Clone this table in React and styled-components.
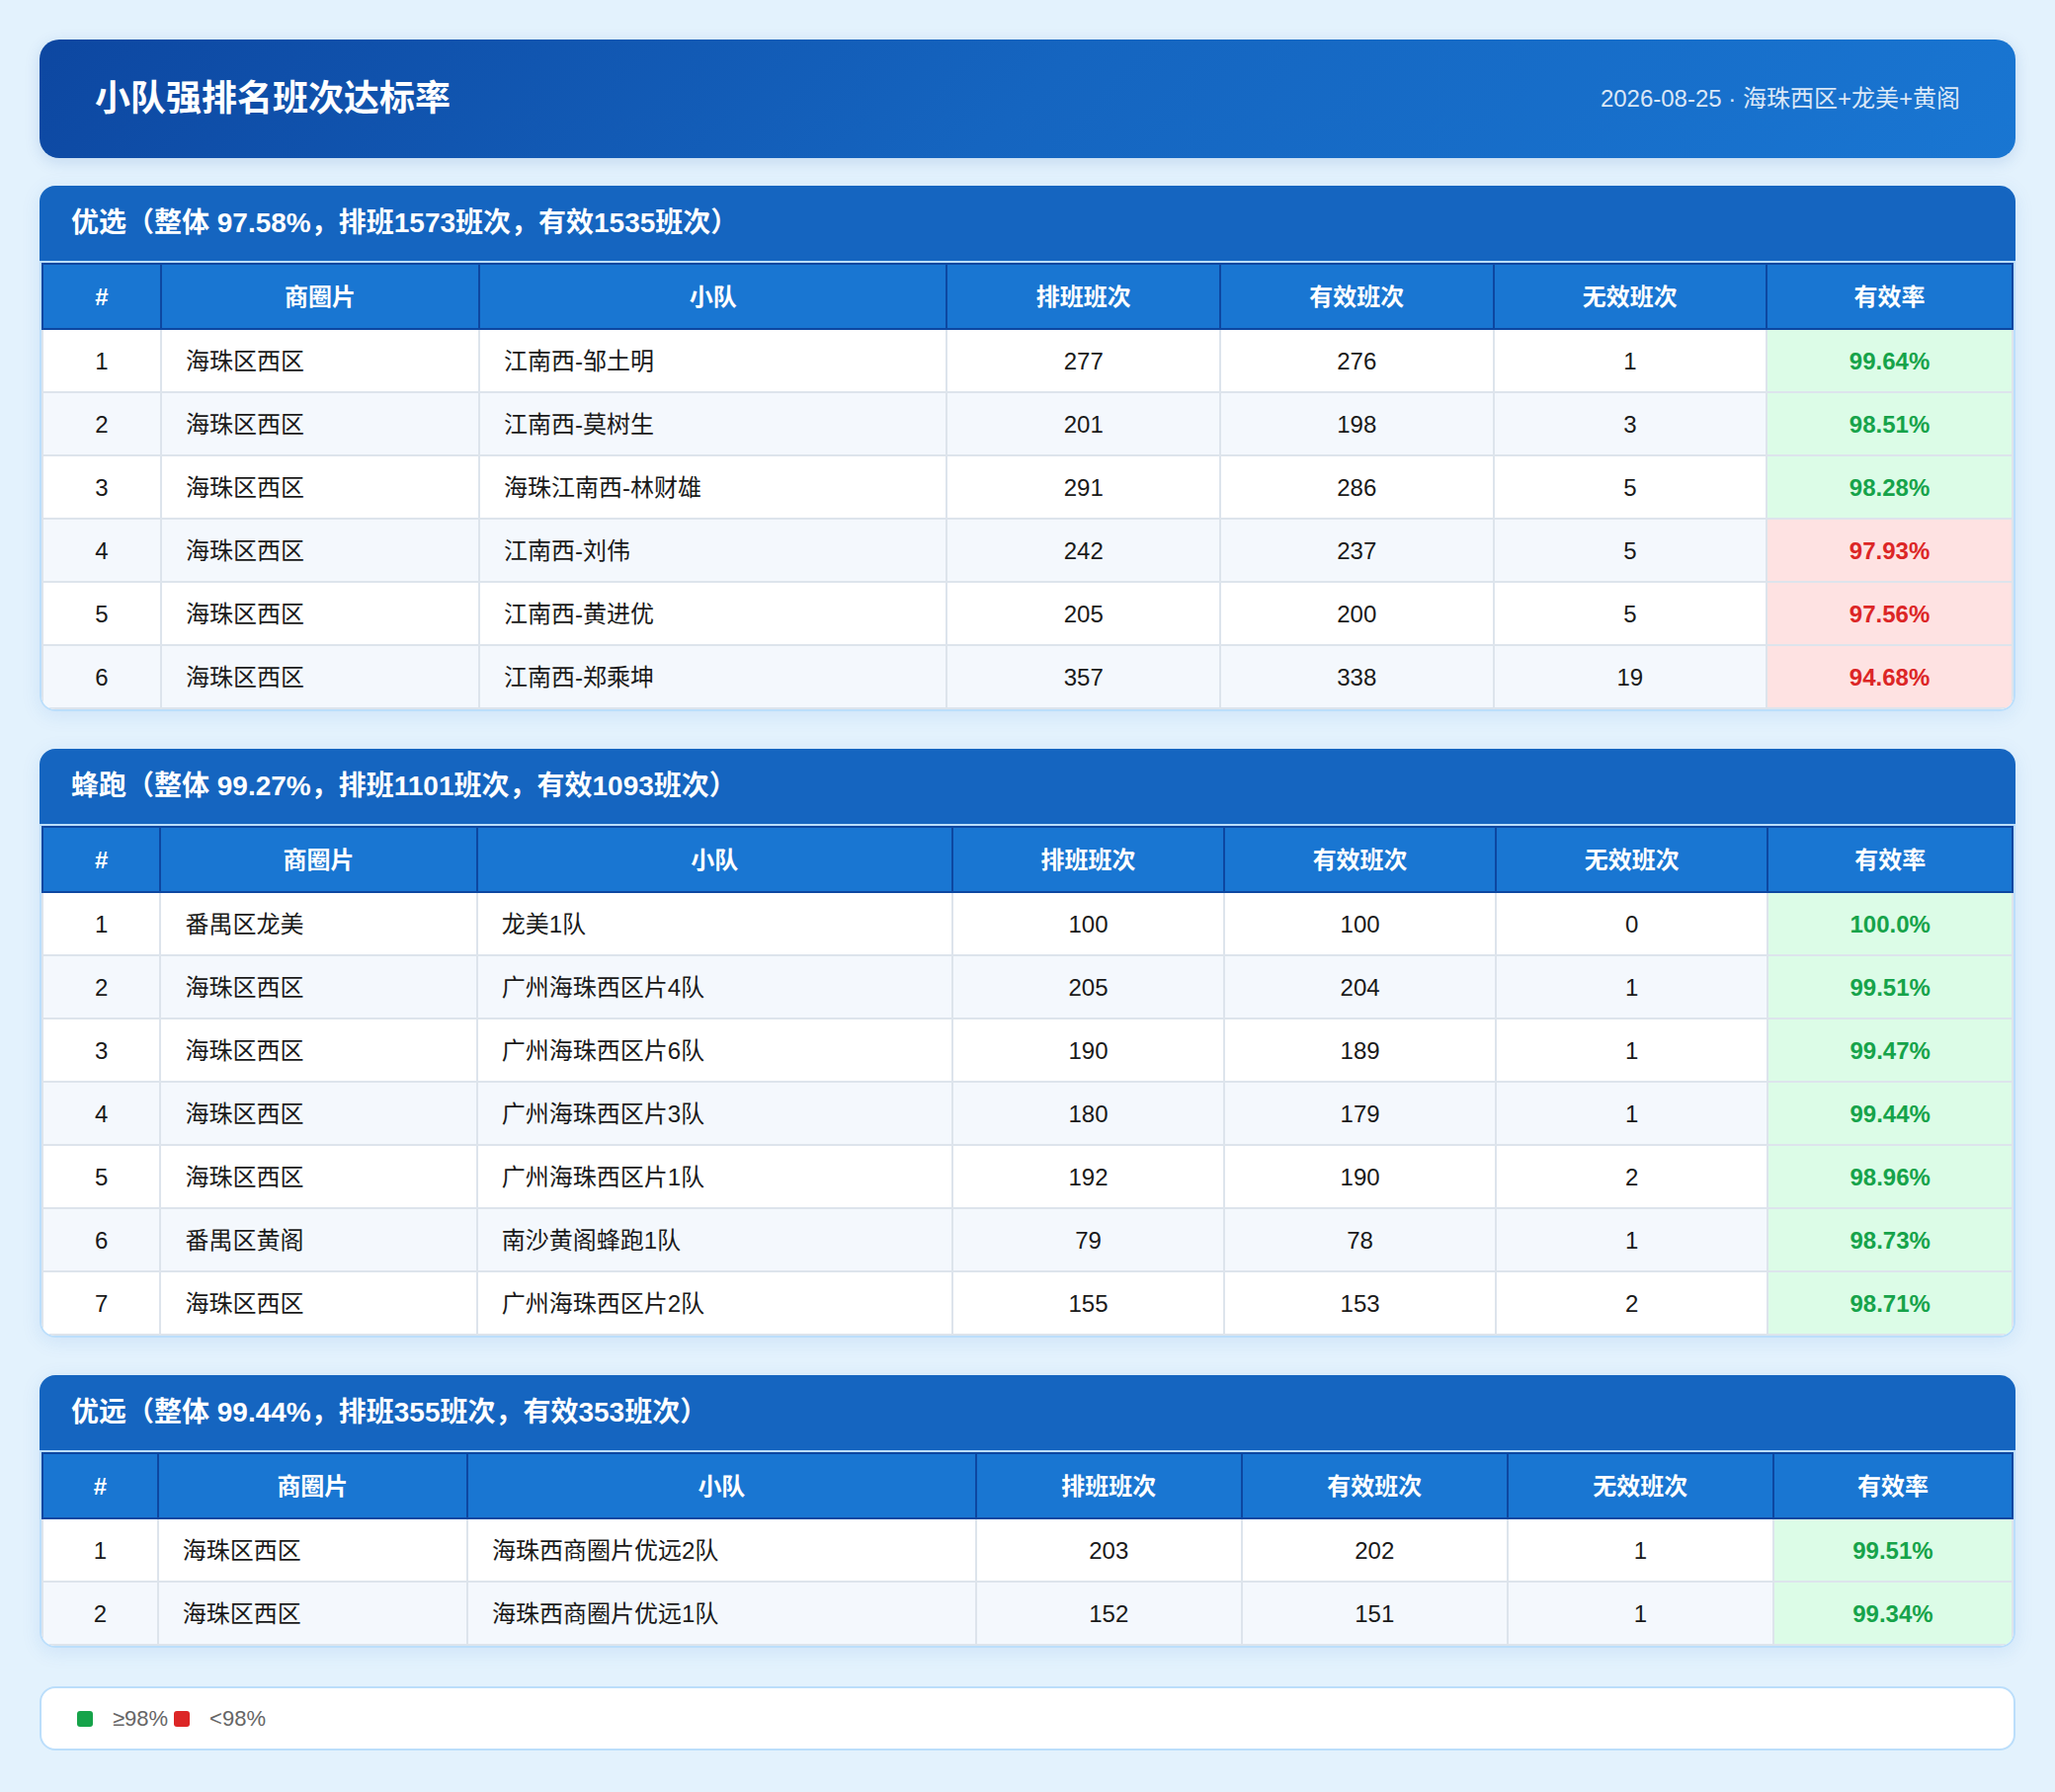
import React from "react";
import styled, { createGlobalStyle } from "styled-components";

const GlobalStyle = createGlobalStyle`
  html, body { margin: 0; padding: 0; background: #e3f2fd; }
  body { font-family: "Liberation Sans", "Noto Sans CJK SC", sans-serif; }
  * { box-sizing: border-box; }
`;

const Page = styled.div`
  padding: 40px 40px 42px;
  background: #e3f2fd;
  display: flex;
  flex-direction: column;
`;

const Header = styled.header`
  height: 120px;
  padding: 0 56px;
  border-radius: 20px;
  background: linear-gradient(135deg, #0d47a1 0%, #1565c0 50%, #1976d2 100%);
  display: flex;
  align-items: center;
  justify-content: space-between;
  box-shadow: 0 4px 16px rgba(13, 71, 161, 0.15);
  margin-bottom: 28px;
`;

const Title = styled.h1`
  margin: 0;
  font-size: 36px;
  font-weight: 700;
  color: #ffffff;
  line-height: 48px;
`;

const Subtitle = styled.div`
  font-size: 24px;
  color: rgba(255, 255, 255, 0.85);
  line-height: 32px;
`;

const Section = styled.section`
  border-radius: 16px;
  box-shadow: 0 4px 20px rgba(21, 101, 192, 0.1);
  margin-bottom: 38px;
`;

const SectionTitle = styled.h2`
  margin: 0;
  padding: 20px 32px;
  line-height: 36px;
  font-size: 28px;
  font-weight: 700;
  color: #ffffff;
  background: #1565c0;
  border-radius: 16px 16px 0 0;
`;

const TableWrap = styled.div`
  border: 2px solid #bbdefb;
  border-radius: 0 0 16px 16px;
  overflow: hidden;
  background: #ffffff;
`;

const Table = styled.table`
  width: 100%;
  border-collapse: collapse;
  font-size: 24px;
  line-height: 30px;
`;

const Th = styled.th`
  background: #1976d2;
  color: #ffffff;
  font-weight: 700;
  padding: 18px 24px 16px;
  border: 2px solid #0d47a1;
  text-align: center;
  white-space: nowrap;
`;

const Row = styled.tr`
  background: ${(p) => (p.$alt ? "#f4f8fd" : "#ffffff")};
`;

const Td = styled.td`
  padding: 17px 24px 15px;
  border: 2px solid #dde4ec;
  color: #1a1a1a;
  text-align: ${(p) => (p.$left ? "left" : "center")};
  white-space: nowrap;
`;

const RateTd = styled(Td)`
  font-weight: 700;
  color: ${(p) => (p.$good ? "#16a34a" : "#dc2626")};
  background: ${(p) => (p.$good ? "#dcfce7" : "#fee2e2")};
`;

const Legend = styled.div`
  margin-top: 1px;
  background: #ffffff;
  border: 2px solid #bbdefb;
  border-radius: 16px;
  padding: 18px 36px;
  display: flex;
  align-items: center;
  gap: 6px;
  font-size: 22px;
  line-height: 25px;
  color: #666666;
`;

const LegendItem = styled.span`
  display: inline-flex;
  align-items: center;
`;

const Dot = styled.span`
  width: 16px;
  height: 16px;
  border-radius: 3px;
  margin-right: 20px;
  background: ${(p) => p.$color};
`;

const headers = ["#", "商圈片", "小队", "排班班次", "有效班次", "无效班次", "有效率"];

const sections = [
  {
    title: "优选（整体 97.58%，排班1573班次，有效1535班次）",
    rows: [
      ["海珠区西区", "江南西-邹土明", 277, 276, 1, "99.64%"],
      ["海珠区西区", "江南西-莫树生", 201, 198, 3, "98.51%"],
      ["海珠区西区", "海珠江南西-林财雄", 291, 286, 5, "98.28%"],
      ["海珠区西区", "江南西-刘伟", 242, 237, 5, "97.93%"],
      ["海珠区西区", "江南西-黄进优", 205, 200, 5, "97.56%"],
      ["海珠区西区", "江南西-郑乘坤", 357, 338, 19, "94.68%"],
    ],
  },
  {
    title: "蜂跑（整体 99.27%，排班1101班次，有效1093班次）",
    rows: [
      ["番禺区龙美", "龙美1队", 100, 100, 0, "100.0%"],
      ["海珠区西区", "广州海珠西区片4队", 205, 204, 1, "99.51%"],
      ["海珠区西区", "广州海珠西区片6队", 190, 189, 1, "99.47%"],
      ["海珠区西区", "广州海珠西区片3队", 180, 179, 1, "99.44%"],
      ["海珠区西区", "广州海珠西区片1队", 192, 190, 2, "98.96%"],
      ["番禺区黄阁", "南沙黄阁蜂跑1队", 79, 78, 1, "98.73%"],
      ["海珠区西区", "广州海珠西区片2队", 155, 153, 2, "98.71%"],
    ],
  },
  {
    title: "优远（整体 99.44%，排班355班次，有效353班次）",
    rows: [
      ["海珠区西区", "海珠西商圈片优远2队", 203, 202, 1, "99.51%"],
      ["海珠区西区", "海珠西商圈片优远1队", 152, 151, 1, "99.34%"],
    ],
  },
];

function RankTable({ title, rows }) {
  return (
    <Section>
      <SectionTitle>{title}</SectionTitle>
      <TableWrap>
        <Table>
          <thead>
            <tr>
              {headers.map((h) => (
                <Th key={h}>{h}</Th>
              ))}
            </tr>
          </thead>
          <tbody>
            {rows.map((r, i) => (
              <Row key={i} $alt={i % 2 === 1}>
                <Td>{i + 1}</Td>
                <Td $left>{r[0]}</Td>
                <Td $left>{r[1]}</Td>
                <Td>{r[2]}</Td>
                <Td>{r[3]}</Td>
                <Td>{r[4]}</Td>
                <RateTd $good={parseFloat(r[5]) >= 98}>{r[5]}</RateTd>
              </Row>
            ))}
          </tbody>
        </Table>
      </TableWrap>
    </Section>
  );
}

export default function App() {
  return (
    <>
      <GlobalStyle />
      <Page>
        <Header>
          <Title>小队强排名班次达标率</Title>
          <Subtitle>2026-08-25 · 海珠西区+龙美+黄阁</Subtitle>
        </Header>
        {sections.map((s) => (
          <RankTable key={s.title} title={s.title} rows={s.rows} />
        ))}
        <Legend>
          <LegendItem>
            <Dot $color="#16a34a" />≥98%
          </LegendItem>
          <LegendItem>
            <Dot $color="#dc2626" />&lt;98%
          </LegendItem>
        </Legend>
      </Page>
    </>
  );
}
